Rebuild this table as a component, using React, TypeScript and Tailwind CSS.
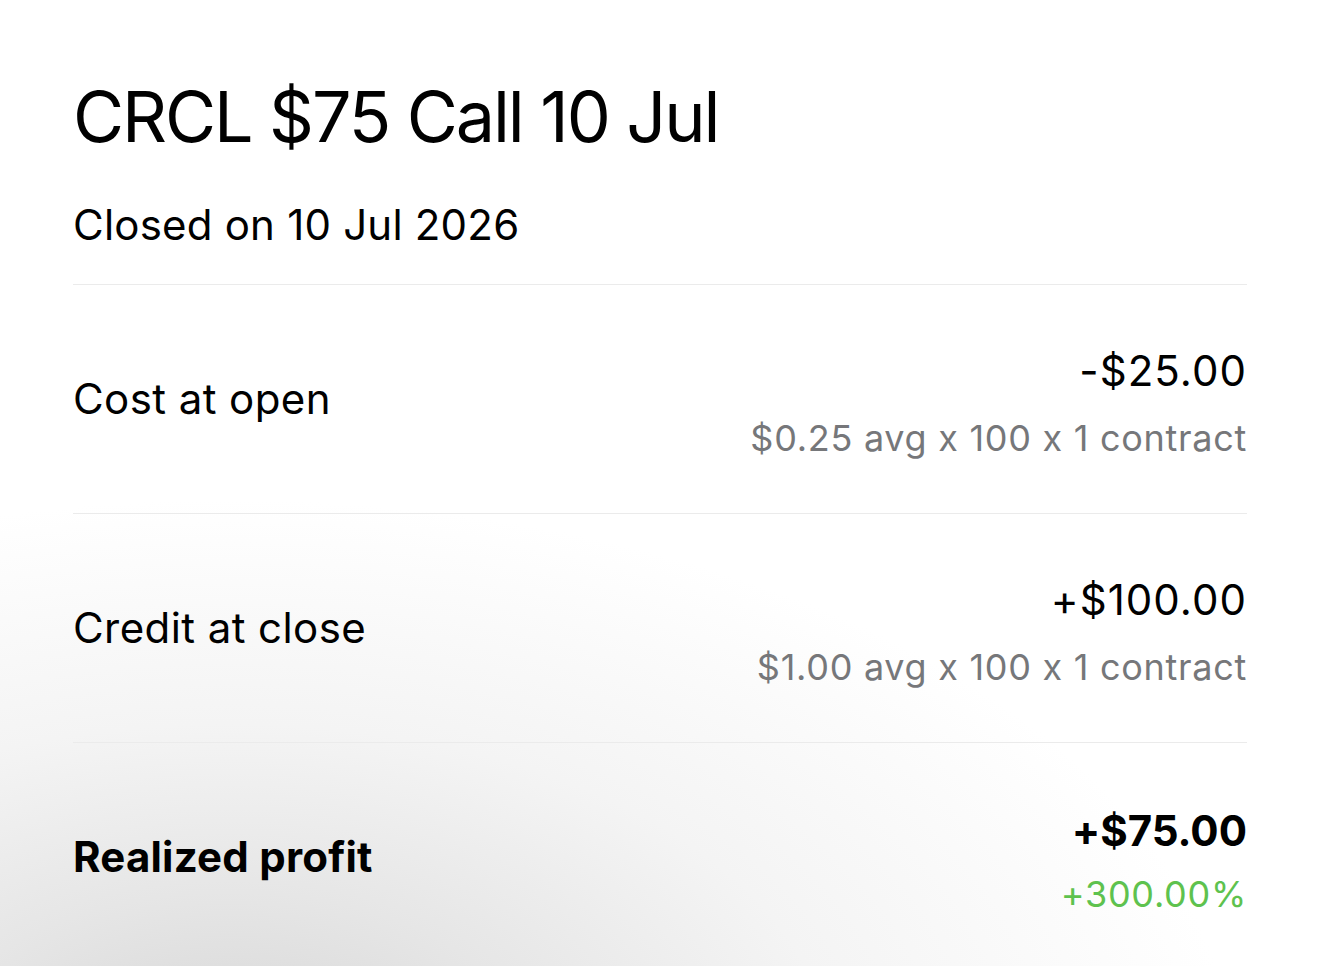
const rows = [
  { label: "Cost at open", value: "-$25.00", sub: "$0.25 avg x 100 x 1 contract", bold: false },
  { label: "Credit at close", value: "+$100.00", sub: "$1.00 avg x 100 x 1 contract", bold: false },
  { label: "Realized profit", value: "+$75.00", sub: "+300.00%", bold: true },
];

export default function App() {
  return (
    <div
      className="min-h-[966px] w-full overflow-hidden bg-white bg-[radial-gradient(ellipse_1000px_560px_at_230px_1060px,#d6d6d6_0%,#e6e6e6_30%,#f4f4f4_60%,#ffffff_100%)] px-[73px] pt-[82px] text-black [font-feature-settings:'calt'_0]"
      style={{ fontFamily: 'Inter, "Noto Sans", sans-serif' }}
    >
      <h1 className="text-[70px] font-normal leading-none tracking-[-0.03em]">CRCL $75 Call 10 Jul</h1>
      <p className="mt-[52px] text-[42px] leading-none tracking-[0.005em]">Closed on 10 Jul 2026</p>

      <div className="mt-[38px] flex flex-col">
        {rows.map((row) => (
          <div key={row.label} className="flex h-[229px] items-center justify-between border-t border-[#ebebeb]">
            <span
              className={`text-[42px] leading-none ${row.bold ? "font-bold tracking-[0.005em]" : "font-normal tracking-[0.01em]"}`}
            >
              {row.label}
            </span>
            <div className={`flex flex-col items-end ${row.bold ? "gap-[24px] pt-[8px]" : "gap-[28px] pt-[8px]"}`}>
              <span
                className={`text-[42px] leading-none ${row.bold ? "font-bold" : "font-normal tracking-[0.025em]"}`}
              >
                {row.value}
              </span>
              <span
                className={`text-[36px] leading-none ${row.bold ? "text-[#5ec24e] tracking-[0.02em]" : "text-[#76777a] tracking-[0.02em]"}`}
              >
                {row.sub}
              </span>
            </div>
          </div>
        ))}
      </div>
    </div>
  );
}
